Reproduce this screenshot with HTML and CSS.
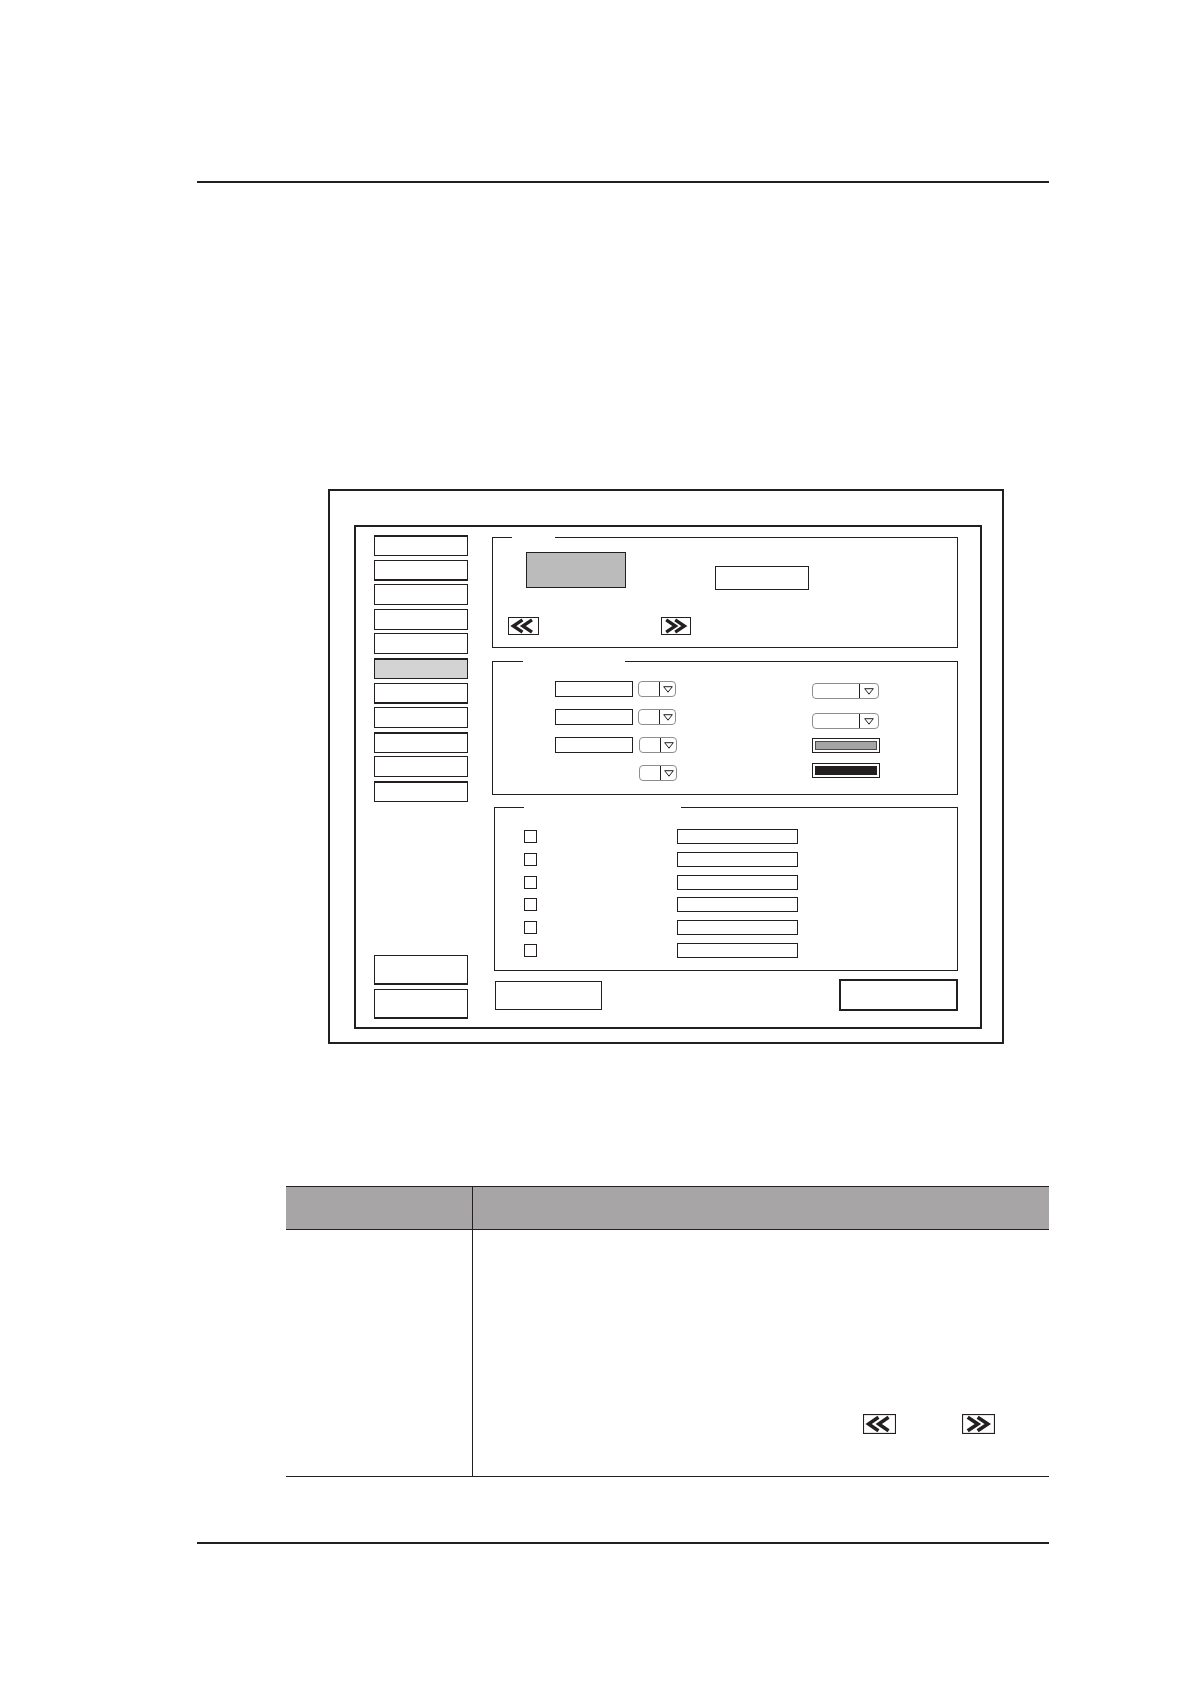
FILE: index.html
```html
<!DOCTYPE html>
<html lang="en">
<head>
<meta charset="utf-8">
<title>Dialog</title>
<link rel="stylesheet" href="styles.css">
</head>
<body>
<div class="page">
  <div class="rule"></div>

  <div class="figure">
    <div class="dialog">
      <div class="sidebar">
        <div class="side-top">
          <div class="side-btn bt"></div>
          <div class="side-btn bb"></div>
          <div class="side-btn"></div>
          <div class="side-btn"></div>
          <div class="side-btn"></div>
          <div class="side-btn active bt"></div>
          <div class="side-btn bb"></div>
          <div class="side-btn"></div>
          <div class="side-btn bt"></div>
          <div class="side-btn"></div>
          <div class="side-btn bt"></div>
        </div>
        <div class="side-bottom">
          <div class="side-btn tall bb"></div>
          <div class="side-btn tall bb"></div>
        </div>
      </div>

      <div class="main">
        <div class="group g1">
          <span class="legend-gap"></span>
          <div class="g1-row1">
            <div class="preview"></div>
            <div class="value-box"></div>
          </div>
          <div class="g1-row2">
            <div class="nav-btn">
              <svg class="chev" viewBox="0 0 31 18" width="31" height="18"><rect x="0.5" y="0.5" width="30" height="17" fill="#fff" stroke="#231f20" stroke-width="1"/><polyline points="14.5,2.9 5.3,9 14.5,15.1" fill="none" stroke="#231f20" stroke-width="3.3" stroke-linejoin="miter" stroke-miterlimit="6"/><polyline points="24,2.9 14.8,9 24,15.1" fill="none" stroke="#231f20" stroke-width="3.3" stroke-linejoin="miter" stroke-miterlimit="6"/></svg>
            </div>
            <div class="nav-btn nav-next">
              <svg class="chev" viewBox="0 0 30 18" width="30" height="18"><rect x="0.5" y="0.5" width="29" height="17" fill="#fff" stroke="#231f20" stroke-width="1"/><polyline points="5.2,2.9 14.4,9 5.2,15.1" fill="none" stroke="#231f20" stroke-width="3.3" stroke-linejoin="miter" stroke-miterlimit="6"/><polyline points="14.2,2.9 23.4,9 14.2,15.1" fill="none" stroke="#231f20" stroke-width="3.3" stroke-linejoin="miter" stroke-miterlimit="6"/></svg>
            </div>
          </div>
        </div>

        <div class="group g2">
          <span class="legend-gap"></span>
          <div class="g2-left">
            <div class="g2-row">
              <div class="field"></div>
              <div class="dd dd-sm"><span class="dd-val"></span><span class="dd-arrow"><svg viewBox="0 0 10 7" width="10" height="7"><polygon points="0.7,0.7 9.3,0.7 5,6.2" fill="#fff" stroke="#231f20" stroke-width="1"/></svg></span></div>
            </div>
            <div class="g2-row">
              <div class="field"></div>
              <div class="dd dd-sm"><span class="dd-val"></span><span class="dd-arrow"><svg viewBox="0 0 10 7" width="10" height="7"><polygon points="0.7,0.7 9.3,0.7 5,6.2" fill="#fff" stroke="#231f20" stroke-width="1"/></svg></span></div>
            </div>
            <div class="g2-row">
              <div class="field"></div>
              <div class="dd dd-sm shift"><span class="dd-val"></span><span class="dd-arrow"><svg viewBox="0 0 10 7" width="10" height="7"><polygon points="0.7,0.7 9.3,0.7 5,6.2" fill="#fff" stroke="#231f20" stroke-width="1"/></svg></span></div>
            </div>
            <div class="g2-row">
              <div class="field blank"></div>
              <div class="dd dd-sm shift"><span class="dd-val"></span><span class="dd-arrow"><svg viewBox="0 0 10 7" width="10" height="7"><polygon points="0.7,0.7 9.3,0.7 5,6.2" fill="#fff" stroke="#231f20" stroke-width="1"/></svg></span></div>
            </div>
          </div>
          <div class="g2-right">
            <div class="dd dd-lg"><span class="dd-val"></span><span class="dd-arrow"><svg viewBox="0 0 10 7" width="10" height="7"><polygon points="0.7,0.7 9.3,0.7 5,6.2" fill="#fff" stroke="#231f20" stroke-width="1"/></svg></span></div>
            <div class="dd dd-lg second"><span class="dd-val"></span><span class="dd-arrow"><svg viewBox="0 0 10 7" width="10" height="7"><polygon points="0.7,0.7 9.3,0.7 5,6.2" fill="#fff" stroke="#231f20" stroke-width="1"/></svg></span></div>
            <div class="swatch swatch-gray"><span></span></div>
            <div class="swatch swatch-black"><span></span></div>
          </div>
        </div>

        <div class="group g3">
          <span class="legend-gap"></span>
          <div class="g3-row"><span class="check"></span><span class="long-field"></span></div>
          <div class="g3-row"><span class="check"></span><span class="long-field"></span></div>
          <div class="g3-row"><span class="check"></span><span class="long-field"></span></div>
          <div class="g3-row"><span class="check"></span><span class="long-field"></span></div>
          <div class="g3-row"><span class="check"></span><span class="long-field"></span></div>
          <div class="g3-row"><span class="check"></span><span class="long-field"></span></div>
        </div>

        <div class="actions">
          <div class="btn-left"></div>
          <div class="btn-right"></div>
        </div>
      </div>
    </div>
  </div>

  <div class="table">
    <div class="thead">
      <div class="th"></div>
      <div class="th th2"></div>
    </div>
    <div class="tbody">
      <div class="td"></div>
      <div class="td td2">
        <svg class="chev" viewBox="0 0 31 18" width="33" height="20" preserveAspectRatio="none"><rect x="0.5" y="0.5" width="30" height="17" fill="#fff" stroke="#231f20" stroke-width="1"/><polyline points="14.5,2.9 5.3,9 14.5,15.1" fill="none" stroke="#231f20" stroke-width="3.3" stroke-miterlimit="6"/><polyline points="24,2.9 14.8,9 24,15.1" fill="none" stroke="#231f20" stroke-width="3.3" stroke-miterlimit="6"/></svg>
        <svg class="chev" viewBox="0 0 30 18" width="33" height="20" preserveAspectRatio="none"><rect x="0.5" y="0.5" width="29" height="17" fill="#fff" stroke="#231f20" stroke-width="1"/><polyline points="5.2,2.9 14.4,9 5.2,15.1" fill="none" stroke="#231f20" stroke-width="3.3" stroke-miterlimit="6"/><polyline points="14.2,2.9 23.4,9 14.2,15.1" fill="none" stroke="#231f20" stroke-width="3.3" stroke-miterlimit="6"/></svg>
      </div>
    </div>
  </div>

  <div class="rule rule-bottom"></div>
</div>
</body>
</html>
```

FILE: styles.css
```css
* { box-sizing: border-box; }

html, body {
  margin: 0;
  padding: 0;
  background: #fff;
}

body {
  font-family: "Liberation Sans", Arial, sans-serif;
  color: #231f20;
}

.page {
  width: 1191px;
  height: 1684px;
  padding-top: 181px;
  overflow: hidden;
}

.rule {
  margin-left: 197px;
  width: 852px;
  height: 0;
  border-top: 2px solid #231f20;
}

.rule-bottom { margin-top: 65px; }

/* ---------- dialog figure ---------- */
.figure {
  margin-top: 306px;
  margin-left: 328px;
  width: 676px;
  height: 555px;
  border: 2px solid #231f20;
  padding: 34px 0 0 24px;
}

.dialog {
  width: 628px;
  height: 504px;
  border: 2px solid #231f20;
  padding: 8px 22px 8px 18px;
  display: flex;
}

.sidebar {
  width: 94px;
  display: flex;
  flex-direction: column;
  justify-content: space-between;
}

.side-top {
  display: flex;
  flex-direction: column;
  gap: 3.6px;
}

.side-bottom {
  display: flex;
  flex-direction: column;
  gap: 4px;
}

.side-btn {
  height: 21px;
  border: 1px solid #231f20;
  background: #fff;
}

.side-btn.bt { border-top-width: 2px; }
.side-btn.bb { border-bottom-width: 2px; }
.side-btn.active { background: #d3d3d3; }
.side-btn.tall { height: 30px; }

.main {
  margin-left: 24px;
  width: 466px;
  display: flex;
  flex-direction: column;
}

.group {
  position: relative;
  border: 1px solid #231f20;
}

.legend-gap {
  position: absolute;
  top: -1px;
  height: 1px;
  background: #fff;
}

/* group 1 */
.g1 {
  margin-top: 2px;
  height: 111px;
}

.g1 .legend-gap { left: 19px; width: 43px; }

.g1-row1 {
  display: flex;
  align-items: flex-start;
  padding: 14px 0 0 33px;
}

.preview {
  width: 100px;
  height: 36px;
  background: #bbbbbb;
  border: 1px solid #231f20;
}

.value-box {
  margin-left: 89px;
  margin-top: 14px;
  width: 94px;
  height: 24px;
  border: 1px solid #231f20;
}

.g1-row2 {
  display: flex;
  padding-left: 15px;
  margin-top: 27px;
}

.nav-btn { display: flex; }
.nav-next { margin-left: 122px; }
.chev { display: block; }

/* group 2 */
.g2 {
  margin-top: 13px;
  height: 134px;
  display: flex;
  align-items: flex-start;
  padding: 19px 0 0 62px;
}

.g2 .legend-gap { left: 30px; width: 102px; }

.g2-left {
  width: 124px;
  display: flex;
  flex-direction: column;
  gap: 12px;
}

.g2-row {
  display: flex;
  align-items: center;
  height: 16px;
}

.field {
  width: 78px;
  height: 16px;
  border: 1px solid #231f20;
}

.field.blank { visibility: hidden; }

.dd {
  display: flex;
  height: 16px;
  border: 1px solid #8e8e8e;
  border-radius: 4px;
  background: #fff;
}

.dd-val { flex: 1; }

.dd-arrow {
  display: flex;
  justify-content: center;
  align-items: center;
  border-left: 1px solid #231f20;
}

.dd-arrow svg { display: block; }

.dd-sm { width: 38px; margin-left: 5px; }
.dd-sm.shift { margin-left: 6px; }
.dd-sm .dd-arrow { width: 16px; }

.g2-right {
  margin-left: 133px;
  margin-top: 2px;
  display: flex;
  flex-direction: column;
}

.dd-lg { width: 67px; }
.dd-lg .dd-arrow { width: 19px; }
.dd-lg.second { margin-top: 14px; }

.swatch {
  width: 68px;
  height: 15px;
  border: 1px solid #231f20;
  padding: 2px;
  display: flex;
}

.swatch span { flex: 1; }
.swatch-gray { margin-top: 9px; }
.swatch-gray span { background: #a5a5a5; border: 1px solid #4a4a4a; }
.swatch-black { margin-top: 10px; }
.swatch-black span { background: #231f20; }

/* group 3 */
.g3 {
  margin-top: 12px;
  margin-left: 2px;
  height: 164px;
  padding-top: 21px;
  display: flex;
  flex-direction: column;
  gap: 7.8px;
}

.g3 .legend-gap { left: 29px; width: 157px; }

.g3-row {
  display: flex;
  align-items: center;
  height: 15px;
}

.check {
  margin-left: 29px;
  width: 13px;
  height: 13px;
  border: 1px solid #231f20;
}

.long-field {
  margin-left: 140px;
  width: 121px;
  height: 15px;
  border: 1px solid #231f20;
}

/* bottom buttons */
.actions {
  margin-top: 8px;
  display: flex;
  justify-content: space-between;
  align-items: center;
}

.btn-left {
  margin-left: 3px;
  width: 107px;
  height: 29px;
  border: 1px solid #231f20;
}

.btn-right {
  width: 119px;
  height: 32px;
  border: 2px solid #231f20;
}

/* ---------- table ---------- */
.table {
  margin-top: 142px;
  margin-left: 286px;
  width: 763px;
}

.thead {
  display: grid;
  grid-template-columns: 186px 1fr;
  height: 44px;
  background: #a7a5a6;
  border-top: 1px solid #231f20;
  border-bottom: 1px solid #231f20;
}

.th2 { border-left: 1px solid #231f20; }

.tbody {
  display: grid;
  grid-template-columns: 186px 1fr;
  height: 247px;
  border-bottom: 1px solid #231f20;
}

.td2 {
  border-left: 1px solid #231f20;
  padding: 184px 0 0 390px;
  display: flex;
  align-items: flex-start;
  gap: 66px;
}
```
